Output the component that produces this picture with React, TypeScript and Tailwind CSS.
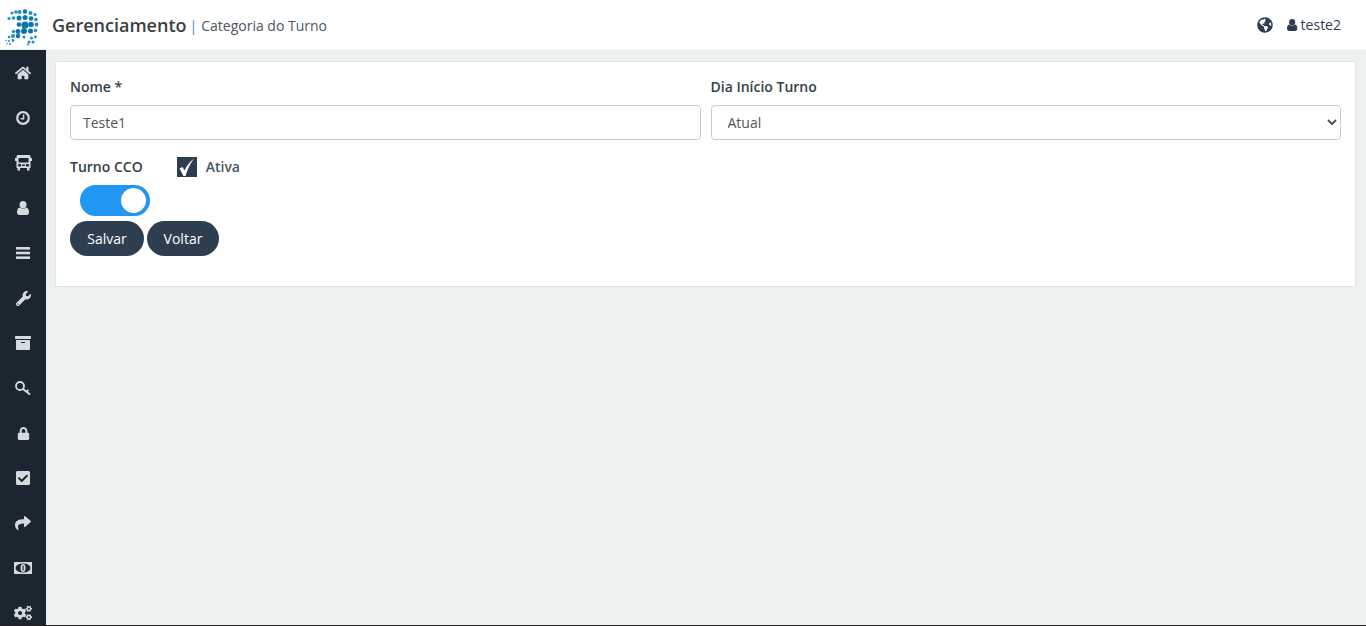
import React from 'react';
import { FaHome, FaWrench, FaArchive, FaLock, FaCheckSquare, FaShare, FaCogs, FaGlobeAmericas } from 'react-icons/fa';

function ClockIcon() {
  return (
    <svg width="14" height="14" viewBox="0 0 14 14">
      <circle cx="7" cy="7" r="5.8" fill="none" stroke="currentColor" strokeWidth="2.2" />
      <path d="M7.6 3.4V7.8H4.6" fill="none" stroke="currentColor" strokeWidth="1.4" />
    </svg>
  );
}

function BusIcon() {
  return (
    <svg width="17" height="16" viewBox="0 0 17 16">
      <path
        fillRule="evenodd"
        fill="currentColor"
        d="M3 0H14C15 0 15.500 .6 15.500 1.500V3H17V6H15.500V13H14.500V15.500H12V13H5V15.500H2.500V13H1.500V6H0V3H1.500V1.500C1.500 .6 2 0 3 0ZM3.500 3V7.500H13.500V3ZM3.200 9V11.500H6V9ZM11 9V11.500H13.800V9ZM7 9.500V11H10V9.500Z"
      />
    </svg>
  );
}

function UserIcon({ size = 14 }: { size?: number }) {
  return (
    <svg width={size * 0.86} height={size} viewBox="0 0 12 14">
      <ellipse cx="6" cy="3.700" rx="3.500" ry="3.700" fill="currentColor" />
      <path d="M2.500 6.500C3.500 8 8.500 8 9.500 6.500C11 7 12 8.500 12 11.500C12 13 11 14 9.800 14H2.200C1 14 0 13 0 11.500C0 8.500 1 7 2.500 6.500Z" fill="currentColor" />
    </svg>
  );
}

function BarsIcon() {
  return (
    <svg width="14" height="12" viewBox="0 0 14 12">
      <rect y="0" width="14" height="2.600" fill="currentColor" />
      <rect y="4.700" width="14" height="2.600" fill="currentColor" />
      <rect y="9.400" width="14" height="2.600" fill="currentColor" />
    </svg>
  );
}

function KeyIcon() {
  return (
    <svg width="16" height="15" viewBox="0 0 16 15">
      <circle cx="5" cy="5" r="4" fill="none" stroke="currentColor" strokeWidth="1.800" />
      <path d="M8 8L15 13.500M11.500 10.800L13.300 8.800" fill="none" stroke="currentColor" strokeWidth="2" />
    </svg>
  );
}

function MoneyIcon() {
  return (
    <svg width="18" height="12" viewBox="0 0 18 12">
      <rect width="18" height="12" fill="currentColor" />
      <ellipse cx="9" cy="6" rx="7.500" ry="4.500" fill="#1b2631" />
      <ellipse cx="9" cy="6" rx="2.500" ry="4" fill="currentColor" />
      <rect x="8.400" y="3.500" width="1.200" height="5" fill="#1b2631" />
    </svg>
  );
}

const menu = [
  <FaHome size={16} />,
  <ClockIcon />,
  <BusIcon />,
  <UserIcon size={14} />,
  <BarsIcon />,
  <FaWrench size={15} />,
  <FaArchive size={16} />,
  <KeyIcon />,
  <FaLock size={13} />,
  <FaCheckSquare size={16} />,
  <FaShare size={16} />,
  <MoneyIcon />,
  <FaCogs size={18} />,
];

// dots of the logo: x, y, radius
const dots = [
  [12, 13, 1.5], [16, 12, 1.8], [19.500, 12, 2], [25, 11.500, 2.200], [30.500, 13, 2], [35, 14.500, 1.600],
  [9, 18.500, 1.600], [13.500, 18, 1.800], [19, 18, 2.500], [25, 17.500, 2.500], [31, 18.500, 2.300], [36, 19.500, 1.800],
  [19, 24.500, 2.300], [25, 25, 3.600], [31, 24.500, 2.700], [36.500, 24.500, 1.900],
  [13.500, 31.500, 1.700], [18, 31.500, 2.400], [24, 31, 3], [30.500, 31, 2.500], [35.500, 30.500, 1.800],
  [9, 37, 1.300], [13, 36, 2], [18, 36, 2.200], [24, 37, 1.500], [31.500, 38, 1.600], [35.500, 37, 1.400],
  [6, 40.500, 0.800], [9, 41, 1.100], [13, 40.500, 1.400], [29, 42, 1.500], [33, 42, 1.500],
  [7, 43.500, 0.800], [10, 44, 0.900], [28, 44.500, 1.100],
];

function Logo() {
  return (
    <svg width="46" height="50" viewBox="0 0 46 50" className="shrink-0">
      {dots.map(([x, y, r], i) => (
        <circle key={i} cx={x} cy={y} r={r} fill={r > 2.1 ? '#0577a8' : '#1b93c4'} />
      ))}
    </svg>
  );
}

export default function App() {
  return (
    <div className="h-[626px] w-[1366px] overflow-hidden bg-[#ecf0f1] font-['Open_Sans',sans-serif] text-[14px] text-[#2c3e50]">
      <header className="flex h-[50px] items-center border-b border-[#eef1f2] bg-white pr-[25px]">
        <Logo />
        <span className="ml-[6px] text-[18px] font-semibold leading-none text-[#3a3f44]">Gerenciamento</span>
        <span className="ml-[3px] translate-y-[1px] text-[14px] leading-none text-[#3498db]">|</span>
        <span className="ml-[4px] translate-y-[1px] text-[14px] leading-none text-[#4a5560]">Categoria do Turno</span>
        <div className="ml-auto flex items-center">
          <FaGlobeAmericas size={16} className="text-[#2c3e50]" />
          <span className="ml-[14px]"><UserIcon size={12} /></span>
          <span className="ml-[3px] text-[14px]">teste2</span>
        </div>
      </header>

      <div className="flex h-[576px] border-b border-[#222]">
        <nav className="flex w-[46px] shrink-0 flex-col items-center gap-[15px] overflow-hidden bg-[#1b2631] pt-[8px]">
          {menu.map((icon, i) => (
            <div key={i} className="flex h-[30px] shrink-0 items-center justify-center text-[#d5dade]">
              {icon}
            </div>
          ))}
        </nav>

        <main className="flex-1 pl-[9px] pr-[10px] pt-[11px]">
          <div className="h-[226px] rounded-[2px] border border-[#e1e5e6] bg-white px-[14px] pt-[14px]">
            <div className="flex gap-[10px]">
              <div className="flex-1">
                <label className="block text-[14px] font-semibold leading-[22px] text-[#333f48]">Nome *</label>
                <input
                  defaultValue="Teste1"
                  className="mt-[7px] block h-[35px] w-full rounded-[4px] border border-[#ccc] bg-white px-3 text-[14px] text-[#555] outline-none"
                />
              </div>
              <div className="flex-1">
                <label className="block text-[14px] font-semibold leading-[22px] text-[#333f48]">Dia Início Turno</label>
                <select
                  defaultValue="Atual"
                  className="mt-[7px] block h-[35px] w-full rounded-[4px] border border-[#ccc] bg-white px-3 text-[14px] text-[#555] outline-none"
                >
                  <option>Atual</option>
                </select>
              </div>
            </div>

            <div className="mt-[17px] flex items-center">
              <span className="text-[14px] font-semibold leading-[20px] text-[#333f48]">Turno CCO</span>
              <div className="ml-[34px] flex h-[20px] w-[20px] items-center justify-center bg-[#2c3e50]">
                <svg width="20" height="20" viewBox="0 0 20 20">
                  <path d="M2.500 11.500L5.500 10L7.500 13.500C9.500 9 12.500 5 17 1.500C13.500 6.500 10.500 12 8.500 19H6.500Z" fill="#fff" />
                </svg>
              </div>
              <span className="ml-[9px] text-[14px] font-semibold leading-[20px] text-[#4a5560]">Ativa</span>
            </div>

            <div className="ml-[10px] mt-[8px] flex h-[31px] w-[70px] items-center justify-end rounded-full bg-[#2196f3] pr-[4px]">
              <div className="h-[25px] w-[25px] rounded-full bg-white" />
            </div>

            <div className="mt-[5px] flex gap-[3px]">
              <button className="h-[35px] w-[74px] rounded-full bg-[#2c3e50] text-[14px] text-white">Salvar</button>
              <button className="h-[35px] w-[72px] rounded-full bg-[#2c3e50] text-[14px] text-white">Voltar</button>
            </div>
          </div>
        </main>
      </div>
    </div>
  );
}
